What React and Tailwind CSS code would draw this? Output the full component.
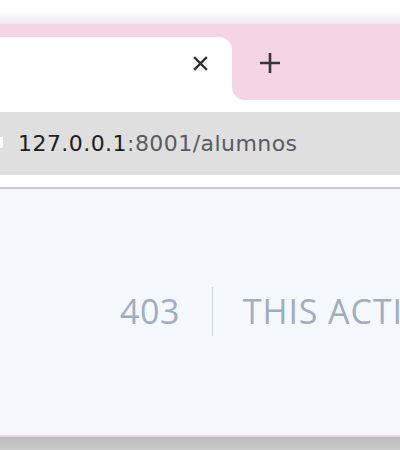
import React from 'react'

const App = () => {
  return (
    <div className="w-[400px] h-[450px] overflow-hidden bg-white flex flex-col font-['Open_Sans',sans-serif]">
      {/* window top edge */}
      <div className="h-[24px] shrink-0 bg-gradient-to-b from-white from-50% to-[#e9e9e9]" />

      {/* tab strip */}
      <div className="h-[13px] shrink-0 bg-[#f5d5e5]" />
      <div className="h-[63px] shrink-0 flex bg-[#f5d5e5]">
        <div className="w-[232px] bg-white rounded-tr-[13px] flex items-center justify-end pr-[24px] pb-[11px]">
          <svg width="15" height="15" viewBox="0 0 15 15" className="text-[#2f2f33]">
            <path d="M2 2 L13 13 M13 2 L2 13" stroke="currentColor" strokeWidth="2.4" strokeLinecap="square" />
          </svg>
        </div>
        <div className="flex-1 bg-white">
          <div className="h-full bg-[#f5d5e5] rounded-bl-[13px] flex items-center pl-[28px] pb-[11px]">
            <svg width="20" height="20" viewBox="0 0 20 20" className="text-[#35353b]">
              <path d="M10 0 V20 M0 10 H20" stroke="currentColor" strokeWidth="2.6" />
            </svg>
          </div>
        </div>
      </div>

      {/* toolbar */}
      <div className="h-[12px] shrink-0 bg-white" />
      <div className="h-[63px] shrink-0 bg-[#dfdfdf] flex items-center relative">
        <div className="absolute left-[-6px] top-[25px] w-[9px] h-[11px] rounded-[2px] bg-white" />
        <span className="pl-[18px] text-[22px] tracking-[0.45px] text-[#1d1d22] leading-none font-['DejaVu_Sans',sans-serif]">
          127.0.0.1<span className="text-[#5a5a63]">:8001/alumnos</span>
        </span>
      </div>
      <div className="h-[12px] shrink-0 bg-white" />
      <div className="h-[2px] shrink-0 bg-[#cacaca]" />

      {/* page */}
      <div className="flex-1 bg-[#f5f8fc] flex items-center pl-[104px] pb-[2px] whitespace-nowrap">
        <div className="pl-4 pr-[32px] text-[34px] tracking-[0.5px] text-[#a0aec0] border-r border-[#c6d1dd] leading-[49px]">
          403
        </div>
        <div className="pl-[30px] text-[34px] tracking-[0.9px] uppercase text-[#a0aec0] leading-[49px]">
          This action is unauthorized.
        </div>
      </div>

      {/* bottom edge */}
      <div className="h-[2px] shrink-0 bg-[#f0d8e2]" />
      <div className="h-[13px] shrink-0 bg-gradient-to-b from-[#bdbdbd] to-[#cacaca]" />
    </div>
  )
}

export default App
